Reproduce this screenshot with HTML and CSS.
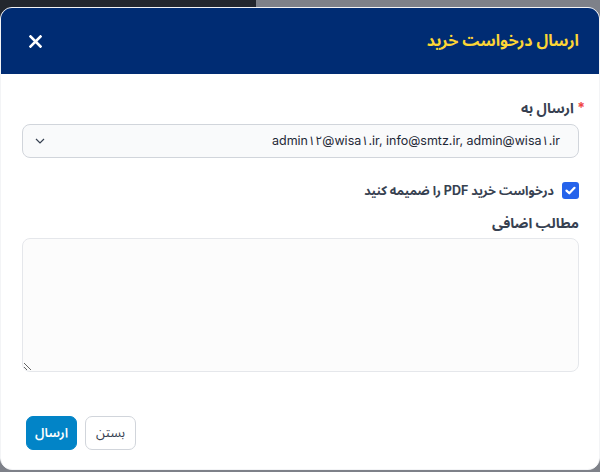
FILE: index.html
```html
<!DOCTYPE html>
<html lang="fa" dir="rtl">
<head>
    <meta charset="UTF-8">
    <meta name="viewport" content="width=device-width, initial-scale=1.0">
    <title>ارسال درخواست خرید</title>
    <link rel="stylesheet" href="styles.css">
</head>
<body>
    <div class="modal">
        <div class="modal__header">
            <h2 class="modal__title">ارسال درخواست خرید</h2>
            <button class="modal__close" aria-label="بستن">
                <svg width="13" height="13" viewBox="0 0 13 13">
                    <path d="M1.5 1.5l10 10M11.5 1.5l-10 10" stroke="#fff" stroke-width="2.6" stroke-linecap="square"/>
                </svg>
            </button>
        </div>
        <div class="modal__body">
            <label class="field__label"><span class="field__required">*</span> ارسال به</label>
            <div class="select">
                <span class="select__value">admin۱۲@wisa۱.ir, info@smtz.ir, admin@wisa۱.ir</span>
                <svg class="select__arrow" width="10" height="6" viewBox="0 0 10 6">
                    <path d="M1 1l4 4 4-4" fill="none" stroke="#374151" stroke-width="1.2"/>
                </svg>
            </div>
            <label class="check">
                <span class="check__box">
                    <svg width="11" height="9" viewBox="0 0 11 9">
                        <path d="M1.5 4.6l2.8 2.7L9.5 1.8" fill="none" stroke="#fff" stroke-width="2.2" stroke-linecap="round" stroke-linejoin="round"/>
                    </svg>
                </span>
                درخواست خرید PDF را ضمیمه کنید
            </label>
            <label class="field__label field__label--area">مطالب اضافی</label>
            <textarea class="textarea"></textarea>
        </div>
        <div class="modal__footer">
            <button class="btn btn--light">بستن</button>
            <button class="btn btn--primary">ارسال</button>
        </div>
    </div>
</body>
</html>
```

FILE: styles.css
```css
* {
    box-sizing: border-box;
}
body {
    margin: 0;
    height: 472px;
    overflow: hidden;
    font-family: Inter, "Noto Sans Arabic", "DejaVu Sans", sans-serif;
    background-color: #7e8189;
    background-image: linear-gradient(to right, #23272e 256px, #7e8189 256px);
    background-size: 100% 40px;
    background-repeat: no-repeat;
}
.modal {
    margin-top: 7px;
    height: 463px;
    background: #fff;
    border: 1px solid #f3f4f6;
    border-radius: 12px;
    overflow: hidden;
    display: flex;
    flex-direction: column;
}
.modal__header {
    height: 66px;
    background: #002c73;
    display: flex;
    align-items: center;
    justify-content: space-between;
    padding: 0 20px 0 20px;
}
.modal__title {
    margin: 0;
    font-size: 16px;
    font-weight: 700;
    color: #fcd535;
}
.modal__close {
    border: none;
    background: none;
    padding: 0;
    width: 28px;
    height: 28px;
    display: flex;
    align-items: center;
    justify-content: center;
    cursor: pointer;
}
.modal__body {
    padding: 25px 20px 0 21px;
    display: flex;
    flex-direction: column;
}
.field__label {
    font-size: 14px;
    font-weight: 700;
    color: #374151;
    line-height: 18px;
    margin-bottom: 7px;
}
.field__label--area {
    margin-bottom: 6px;
}
.field__required {
    color: #ef4444;
    margin-right: -6px;
}
.select {
    height: 34px;
    border: 1px solid #d1d5db;
    border-radius: 8px;
    background: #f9fafb;
    display: flex;
    align-items: center;
    justify-content: space-between;
    padding: 0 18px 0 12px;
}
.select__value {
    font-size: 12.5px;
    color: #1f2937;
}
.check {
    display: flex;
    align-items: center;
    gap: 8px;
    margin: 24px 0 15px;
    font-size: 12.5px;
    font-weight: 700;
    color: #374151;
    line-height: 17px;
}
.check__box {
    width: 17px;
    height: 17px;
    border-radius: 3px;
    background: #2563eb;
    display: flex;
    align-items: center;
    justify-content: center;
}
.textarea {
    height: 134px;
    border: 1px solid #e5e7eb;
    border-radius: 8px;
    background: #fcfcfc;
    resize: vertical;
    outline: none;
    font-family: inherit;
}
.modal__footer {
    margin-top: auto;
    padding: 0 0 19px 25px;
    display: flex;
    justify-content: flex-end;
    gap: 8px;
}
.btn {
    height: 34px;
    padding: 0 8px;
    border-radius: 7px;
    font-family: inherit;
    font-size: 13px;
    cursor: pointer;
}
.btn--light {
    padding: 0 10px;
    background: #fff;
    border: 1px solid #d1d5db;
    color: #374151;
}
.btn--primary {
    background: #0284c7;
    border: 1px solid #0284c7;
    color: #fff;
    font-weight: 600;
}
```
